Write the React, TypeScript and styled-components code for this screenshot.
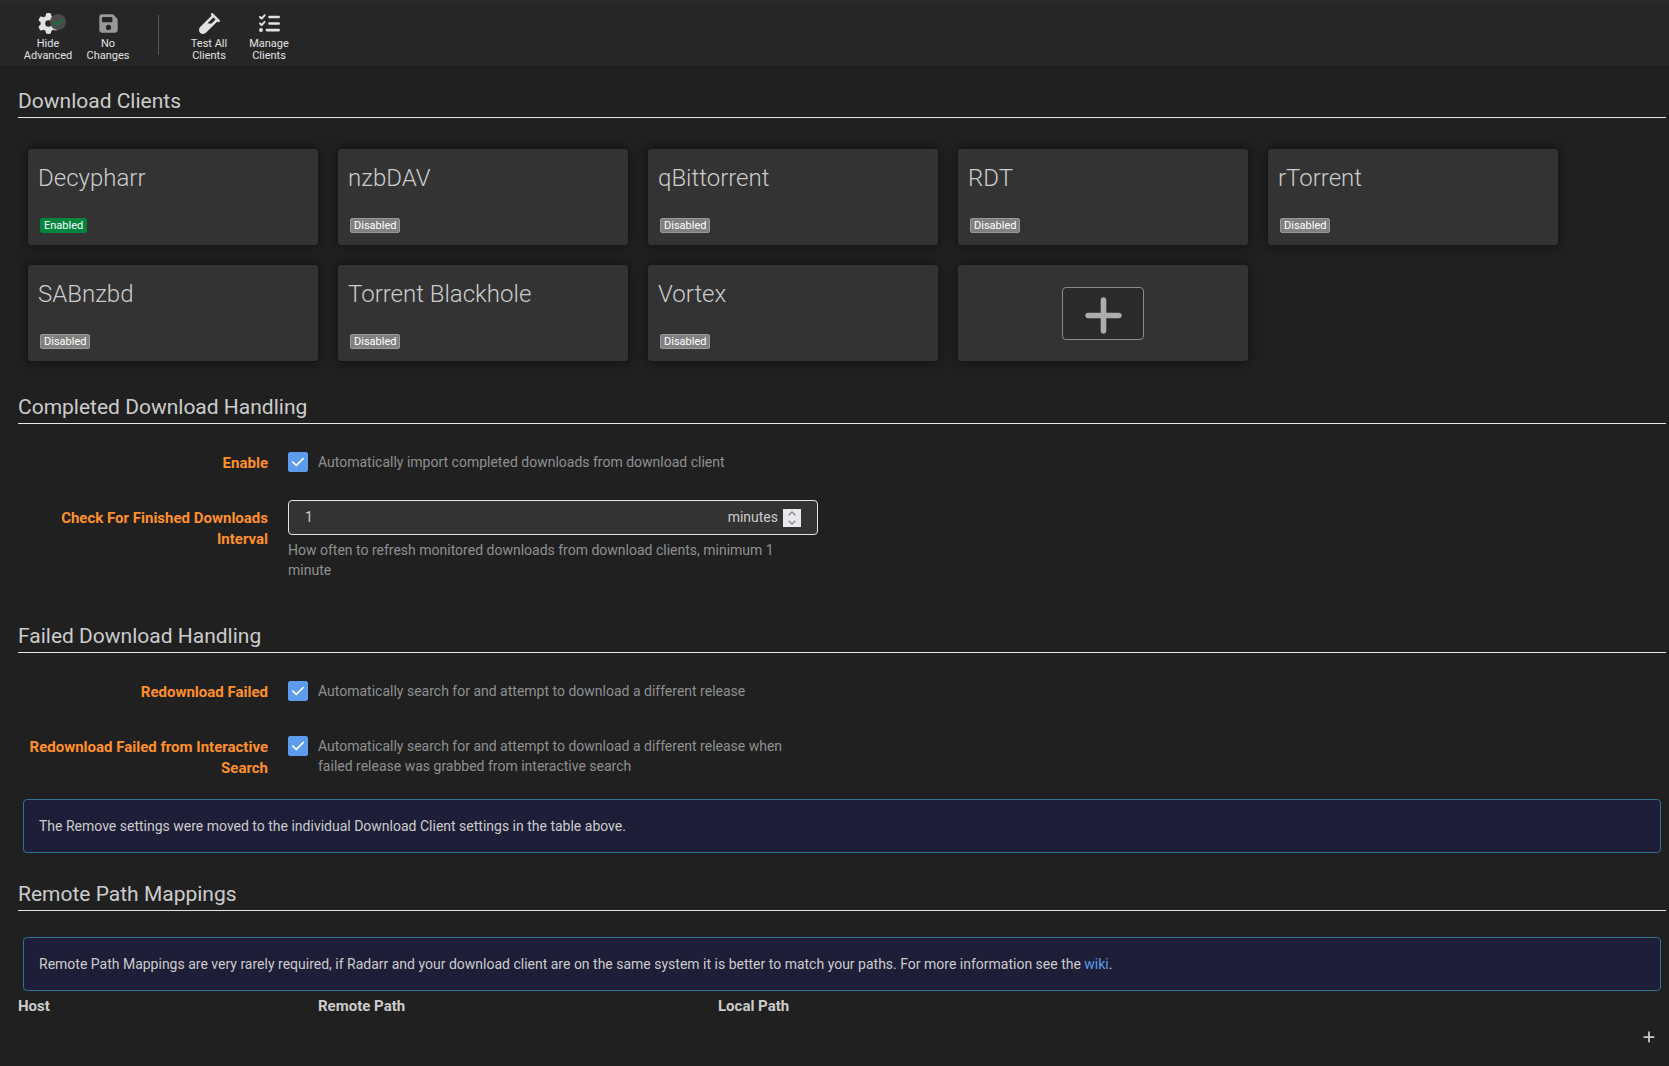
import React, { useState } from 'react';
import styled, { createGlobalStyle } from 'styled-components';
import {
  FaCheck,
  FaFloppyDisk,
  FaGear,
  FaListCheck,
  FaPlus,
  FaVial,
} from 'react-icons/fa6';

const GlobalStyle = createGlobalStyle`
  *, *::before, *::after {
    box-sizing: border-box;
  }

  body {
    margin: 0;
    background: #202020;
    color: #ccc;
    font-family: Roboto, "Open Sans", "Liberation Sans", sans-serif;
    font-size: 14px;
    line-height: 21px;
  }

  button, input {
    font: inherit;
    color: inherit;
  }
`;

const Toolbar = styled.header`
  display: flex;
  align-items: stretch;
  padding: 0 18px;
  border-top: 5px solid #2a2a2a;
  background: #262626;
`;

const ToolbarButton = styled.button`
  display: flex;
  flex-direction: column;
  align-items: center;
  gap: 4px;
  width: 60px;
  padding: 8px 0 3px;
  border: 0;
  background: none;
  color: ${(p) => (p.disabled ? '#999' : '#e1e2e3')};
  cursor: ${(p) => (p.disabled ? 'default' : 'pointer')};
`;

const ToolbarLabel = styled.span`
  padding: 0 4px;
  color: #e1e2e3;
  font-size: 11px;
  line-height: 12px;
  text-align: center;
`;

const ToolbarSeparator = styled.div`
  width: 1px;
  margin: 10px 20px;
  background: #555;
`;

const IconStack = styled.span`
  position: relative;
  display: flex;
`;

const AdvancedBadge = styled.span`
  position: absolute;
  top: 1px;
  left: 12px;
  display: flex;
  align-items: center;
  justify-content: center;
  width: 16px;
  height: 16px;
  border-radius: 50%;
  background: #4b4b4b;
  color: #00853d;
`;

const Page = styled.main`
  padding: 20px 3px 0 18px;
`;

const Section = styled.section`
  margin-bottom: 20px;
`;

const SectionTitle = styled.h2`
  margin: 0;
  border-bottom: 1px solid #e5e5e5;
  font-size: 21px;
  font-weight: 400;
  line-height: 32px;
`;

const SectionBody = styled.div`
  display: flow-root;
  padding-top: 21px;
`;

const CardGrid = styled.ul`
  display: flex;
  flex-wrap: wrap;
  gap: 20px;
  margin: 0;
  padding: 10px;
  list-style: none;
`;

const Card = styled.li`
  width: 290px;
  min-height: 96px;
  padding: 10px;
  border-radius: 3px;
  background: #333;
  box-shadow: 0 0 10px 1px #111;
`;

const AddCard = styled(Card)`
  display: flex;
  align-items: center;
  justify-content: center;
`;

const CardName = styled.h3`
  margin: 0 0 18px;
  font-size: 24px;
  font-weight: 300;
  line-height: 39px;
`;

const StatusRow = styled.div`
  display: flex;
  padding: 2px;
`;

const Status = styled.span<{ $on: boolean }>`
  padding: 1px 3px;
  border: 1px solid ${(p) => (p.$on ? '#00853d' : '#999')};
  border-radius: 2px;
  background: ${(p) => (p.$on ? '#00853d' : '#808080')};
  color: #fff;
  font-size: 11px;
  line-height: 11px;
`;

const AddButton = styled.button`
  display: flex;
  justify-content: center;
  width: 82px;
  padding: 5px 0 1px;
  border: 1px solid #8c8c8c;
  border-radius: 4px;
  background: #2a2a2a;
  color: #adadad;
  cursor: pointer;
`;

const FormRow = styled.div`
  display: flex;
  gap: 20px;
  max-width: 800px;
  margin-bottom: 20px;
`;

const FieldLabel = styled.label`
  flex: 0 0 250px;
  padding-top: 8px;
  color: #ff902b;
  font-size: 15px;
  font-weight: 700;
  text-align: right;
`;

const Field = styled.div`
  flex: 1;
  min-width: 0;
  min-height: 35px;
`;

const CheckField = styled(Field)`
  display: flex;
  gap: 10px;
  padding-top: 7px;
`;

const CheckMark = styled.span`
  position: relative;
  flex: 0 0 20px;
  height: 20px;
  color: #fff;

  svg {
    position: absolute;
    top: 3px;
    left: 3px;
    pointer-events: none;
  }
`;

const CheckInput = styled.input`
  appearance: none;
  display: block;
  width: 20px;
  height: 20px;
  margin: 0;
  border: 1px solid #ccc;
  border-radius: 2px;
  background: #333;

  &:checked {
    border-color: #5d9cec;
    background: #5d9cec;
  }
`;

const Help = styled.p`
  margin: 0;
  padding-right: 10px;
  color: #8e9092;
  line-height: 20px;
`;

const FieldHelp = styled(Help)`
  margin-top: 5px;
`;

const NumberBox = styled.div`
  display: flex;
  align-items: center;
  gap: 5px;
  height: 35px;
  padding: 0 16px;
  border: 1px solid #dde6e9;
  border-radius: 4px;
  background: #333;
`;

const NumberInput = styled.input`
  appearance: textfield;
  flex: 1;
  min-width: 0;
  padding: 0;
  border: 0;
  outline: 0;
  background: none;

  &::-webkit-inner-spin-button,
  &::-webkit-outer-spin-button {
    appearance: none;
    margin: 0;
  }
`;

const Stepper = styled.div`
  display: flex;
  flex-direction: column;
  width: 18px;
  background: #e9e9ed;
`;

const StepButton = styled.button`
  display: flex;
  align-items: center;
  justify-content: center;
  height: 9px;
  padding: 0;
  border: 0;
  background: none;
  color: #8f8b99;
`;

const Alert = styled.div`
  margin: 5px;
  padding: 15px;
  border: 1px solid #2f7391;
  border-radius: 4px;
  background: #1e1e38;
  line-height: 22px;
`;

const Link = styled.a`
  color: #5d9cec;
  text-decoration: none;
`;

const MappingTable = styled.table`
  width: 100%;
  border-collapse: collapse;
  table-layout: fixed;
`;

const MappingHead = styled.th<{ $width?: number }>`
  width: ${(p) => (p.$width ? `${p.$width}px` : 'auto')};
  padding: 0;
  font-size: 15px;
  font-weight: 700;
  text-align: left;
`;

const MappingFooter = styled.div`
  display: flex;
  justify-content: flex-end;
  padding: 10px 10px 0;
`;

const MappingAdd = styled.button`
  display: flex;
  padding: 3px 0;
  border: 0;
  background: none;
  cursor: pointer;
`;

const clients = [
  { name: 'Decypharr', enabled: true },
  { name: 'nzbDAV', enabled: false },
  { name: 'qBittorrent', enabled: false },
  { name: 'RDT', enabled: false },
  { name: 'rTorrent', enabled: false },
  { name: 'SABnzbd', enabled: false },
  { name: 'Torrent Blackhole', enabled: false },
  { name: 'Vortex', enabled: false },
];

function Chevron({ up }: { up?: boolean }) {
  return (
    <svg width="8" height="5" viewBox="0 0 8 5" fill="none" stroke="currentColor" strokeWidth="1.5">
      <path d={up ? 'M0.7 4.2 4 1l3.3 3.2' : 'M0.7 0.8 4 4l3.3-3.2'} />
    </svg>
  );
}

interface CheckRowProps {
  id: string;
  label: string;
  help: string;
}

function CheckRow({ id, label, help }: CheckRowProps) {
  const [checked, setChecked] = useState(true);

  return (
    <FormRow>
      <FieldLabel htmlFor={id}>{label}</FieldLabel>
      <CheckField>
        <CheckMark>
          <CheckInput
            id={id}
            type="checkbox"
            checked={checked}
            onChange={(e) => setChecked(e.target.checked)}
          />
          {checked && <FaCheck size={14} />}
        </CheckMark>
        <Help>{help}</Help>
      </CheckField>
    </FormRow>
  );
}

export default function App() {
  const [interval, setInterval] = useState(1);

  return (
    <>
      <GlobalStyle />
      <Toolbar>
        <ToolbarButton type="button">
          <IconStack>
            <FaGear size={21} />
            <AdvancedBadge>
              <FaCheck size={10} />
            </AdvancedBadge>
          </IconStack>
          <ToolbarLabel>Hide Advanced</ToolbarLabel>
        </ToolbarButton>
        <ToolbarButton type="button" disabled>
          <FaFloppyDisk size={21} />
          <ToolbarLabel>No Changes</ToolbarLabel>
        </ToolbarButton>
        <ToolbarSeparator />
        <ToolbarButton type="button">
          <FaVial size={21} />
          <ToolbarLabel>Test All Clients</ToolbarLabel>
        </ToolbarButton>
        <ToolbarButton type="button">
          <FaListCheck size={21} />
          <ToolbarLabel>Manage Clients</ToolbarLabel>
        </ToolbarButton>
      </Toolbar>

      <Page>
        <Section>
          <SectionTitle>Download Clients</SectionTitle>
          <SectionBody>
            <CardGrid>
              {clients.map((client) => (
                <Card key={client.name}>
                  <CardName>{client.name}</CardName>
                  <StatusRow>
                    <Status $on={client.enabled}>{client.enabled ? 'Enabled' : 'Disabled'}</Status>
                  </StatusRow>
                </Card>
              ))}
              <AddCard>
                <AddButton type="button" aria-label="Add download client">
                  <FaPlus size={45} />
                </AddButton>
              </AddCard>
            </CardGrid>
          </SectionBody>
        </Section>

        <Section>
          <SectionTitle>Completed Download Handling</SectionTitle>
          <SectionBody>
            <CheckRow
              id="enable"
              label="Enable"
              help="Automatically import completed downloads from download client"
            />
            <FormRow>
              <FieldLabel htmlFor="interval">Check For Finished Downloads Interval</FieldLabel>
              <Field>
                <NumberBox>
                  <NumberInput
                    id="interval"
                    type="number"
                    min={1}
                    value={interval}
                    onChange={(e) => setInterval(Number(e.target.value))}
                  />
                  <span>minutes</span>
                  <Stepper>
                    <StepButton
                      type="button"
                      aria-label="Increase interval"
                      onClick={() => setInterval(interval + 1)}
                    >
                      <Chevron up />
                    </StepButton>
                    <StepButton
                      type="button"
                      aria-label="Decrease interval"
                      onClick={() => setInterval(Math.max(1, interval - 1))}
                    >
                      <Chevron />
                    </StepButton>
                  </Stepper>
                </NumberBox>
                <FieldHelp>
                  How often to refresh monitored downloads from download clients, minimum 1 minute
                </FieldHelp>
              </Field>
            </FormRow>
          </SectionBody>
        </Section>

        <Section>
          <SectionTitle>Failed Download Handling</SectionTitle>
          <SectionBody>
            <CheckRow
              id="redownload"
              label="Redownload Failed"
              help="Automatically search for and attempt to download a different release"
            />
            <CheckRow
              id="redownload-interactive"
              label="Redownload Failed from Interactive Search"
              help="Automatically search for and attempt to download a different release when failed release was grabbed from interactive search"
            />
            <Alert>
              The Remove settings were moved to the individual Download Client settings in the table
              above.
            </Alert>
          </SectionBody>
        </Section>

        <Section>
          <SectionTitle>Remote Path Mappings</SectionTitle>
          <SectionBody>
            <Alert>
              Remote Path Mappings are very rarely required, if Radarr and your download client are
              on the same system it is better to match your paths. For more information see the{' '}
              <Link href="#wiki">wiki</Link>.
            </Alert>
            <MappingTable>
              <thead>
                <tr>
                  <MappingHead $width={300}>Host</MappingHead>
                  <MappingHead $width={400}>Remote Path</MappingHead>
                  <MappingHead>Local Path</MappingHead>
                </tr>
              </thead>
            </MappingTable>
            <MappingFooter>
              <MappingAdd type="button" aria-label="Add remote path mapping">
                <FaPlus size={14} />
              </MappingAdd>
            </MappingFooter>
          </SectionBody>
        </Section>
      </Page>
    </>
  );
}
